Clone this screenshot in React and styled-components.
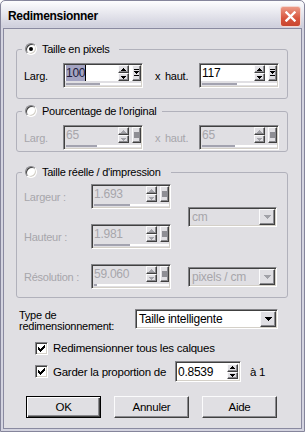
import React from 'react';
import styled, { createGlobalStyle, css } from 'styled-components';

const FACE = '#e0dfe3';
const DIS = '#a7a6ab';

const GlobalStyle = createGlobalStyle`
  html, body { margin: 0; padding: 0; background: #fff; }
  body {
    font-family: "Liberation Sans", Arial, sans-serif;
    font-size: 11px;
    letter-spacing: -0.25px;
    color: #000;
  }
  * { box-sizing: border-box; }
`;

const sunken = css`
  border: 1px solid;
  border-color: #858589 #fff #fff #858589;
  box-shadow: inset 1px 1px #404040, inset -1px -1px #d4d0c8;
`;

const raised = css`
  border: 1px solid;
  border-color: #fbfbfc #404040 #404040 #fbfbfc;
  box-shadow: inset -1px -1px #8a8a8e;
  background: ${FACE};
`;

// ---------- window chrome ----------

const Window = styled.div`
  width: 305px;
  height: 432px;
  display: flex;
  flex-direction: column;
  border: 1px solid #85859b;
  border-radius: 5px 5px 0 0;
  background: linear-gradient(#fdfdfe 0, #ebebf1 10px, #cfcfdc 26px, #d4d4e0 27px);
  padding: 0 2px 2px;
`;

const TitleBar = styled.div`
  height: 27px;
  display: flex;
  align-items: center;
  justify-content: space-between;
  padding: 0 1px 0 5px;
`;

const Title = styled.span`
  font-weight: bold;
  font-size: 12px;
  letter-spacing: -0.3px;
  margin-top: 2px;
`;

const CloseButton = styled.div`
  width: 21px;
  height: 21px;
  margin-top: 3px;
  border-radius: 3px;
  border: 1px solid #f4d6d0;
  background: linear-gradient(#ec9a86, #d8553d 60%, #c9452f);
  display: flex;
  align-items: center;
  justify-content: center;
`;

const Body = styled.div`
  flex: 1;
  background: ${FACE};
  border: 1px solid #8a8aa0;
  padding: 13px 13px 0 12px;
  display: flex;
  flex-direction: column;
`;

// ---------- group boxes ----------

const Group = styled.fieldset`
  margin: ${p => p.$mt}px 0 0;
  padding: 0 8px ${p => p.$pb}px 7px;
  border: 1px solid #b1b1bb;
  border-radius: 3px;
  min-width: 0;
`;

const Legend = styled.legend`
  display: flex;
  align-items: center;
  gap: 5px;
  height: 14px;
  margin-left: -2px;
  padding: 0 ${p => p.$pr}px 0 3px;
`;

const Radio = styled.span`
  width: 12px;
  height: 12px;
  border-radius: 50%;
  border: 1px solid;
  border-color: #858589 #fff #fff #858589;
  box-shadow: inset 1px 1px #404040, inset -1px -1px #d4d0c8;
  background: #fff;
  display: flex;
  align-items: center;
  justify-content: center;

  &::after {
    content: '';
    width: 4px;
    height: 4px;
    border-radius: 50%;
    background: ${p => (p.$checked ? '#000' : 'transparent')};
  }
`;

const PairRow = styled.div`
  display: grid;
  grid-template-columns: 39px 80px 22px 34px 80px;
  align-items: center;
  margin-top: ${p => p.$mt}px;
`;

const Label = styled.span`
  color: ${p => (p.$disabled ? DIS : '#000')};
  padding-left: ${p => p.$pl || 0}px;
  white-space: nowrap;
`;

const RealGrid = styled.div`
  display: grid;
  grid-template-columns: 67px 97px 89px;
  grid-template-rows: 25px 25px 25px;
  row-gap: 15px;
  align-items: center;
  margin-top: 5px;
`;

const GridCell = styled.div`
  grid-column: ${p => p.$col};
  grid-row: ${p => p.$row};
  align-self: center;
`;

// ---------- edit with spin + slider ----------

const EditFrame = styled.div`
  ${sunken};
  width: ${p => p.$w}px;
  height: ${p => p.$h}px;
  padding: 1px;
  display: flex;
  flex-direction: column;
  background: ${p => (p.$disabled ? FACE : '#fff')};
`;

const EditTop = styled.div`
  height: ${p => p.$h}px;
  display: flex;
  align-items: stretch;
`;

const Field = styled.div`
  flex: 1;
  padding-left: 1px;
  line-height: ${p => p.$h}px;
  font-size: 12px;
  color: ${p => (p.$disabled ? DIS : '#000')};
  background: ${p => (p.$disabled ? FACE : '#fff')};
  overflow: hidden;
  white-space: nowrap;
`;

const Selected = styled.span`
  background: #a4a4c2;
  color: #1b1b3c;
  padding: 1px 0;
  border-right: 1px solid #000;
`;

const SpinCol = styled.div`
  width: 11px;
  display: flex;
  flex-direction: column;
`;

const SpinBtn = styled.div`
  ${raised};
  flex: 1;
  display: flex;
  align-items: center;
  justify-content: center;
`;

const PopupBtn = styled.div`
  ${raised};
  width: 9px;
  margin-left: 3px;
  display: flex;
  align-items: center;
  justify-content: center;
`;

const TrackStrip = styled.div`
  flex: 1;
  background: ${FACE};
  padding: 2px 0 0 1px;
`;

const Track = styled.div`
  height: 2px;
  background: #fff;
  display: flex;
`;

const TrackFill = styled.div`
  height: 2px;
  background: #a3a3b0;
`;

const Pixels = ({ rows, color, w, h }) => (
  <svg width={w} height={h} viewBox={`0 0 ${w} ${h}`} shapeRendering="crispEdges">
    {rows.map(([x, y, rw], i) => (
      <rect key={i} x={x} y={y} width={rw} height={1} fill={color} />
    ))}
  </svg>
);

const ArrowUp = ({ color }) => <Pixels w={5} h={3} color={color} rows={[[2, 0, 1], [1, 1, 3], [0, 2, 5]]} />;
const ArrowDown = ({ color }) => <Pixels w={5} h={3} color={color} rows={[[0, 0, 5], [1, 1, 3], [2, 2, 1]]} />;
const BigArrowDown = ({ color }) => (
  <Pixels w={7} h={4} color={color} rows={[[0, 0, 7], [1, 1, 5], [2, 2, 3], [3, 3, 1]]} />
);
const PopupGlyph = () => (
  <Pixels w={5} h={8} color="#000" rows={[[0, 0, 5], [0, 2, 5], [1, 3, 3], [2, 4, 1], [0, 6, 5]]} />
);

const Spin = ({ disabled }) => {
  const c = disabled ? '#a2a2a8' : '#000';
  return (
    <SpinCol>
      <SpinBtn><ArrowUp color={c} /></SpinBtn>
      <SpinBtn><ArrowDown color={c} /></SpinBtn>
    </SpinCol>
  );
};

const DisabledSquare = styled.span`
  width: 5px;
  height: 6px;
  background: #8e8e94;
`;

function SliderEdit({ value, disabled, selected, fill }) {
  return (
    <EditFrame $w={80} $h={25} $disabled={disabled}>
      <EditTop $h={16}>
        <Field $h={16} $disabled={disabled}>
          {selected ? <Selected>{value}</Selected> : value}
        </Field>
        <Spin disabled={disabled} />
        <PopupBtn>{disabled ? <DisabledSquare /> : <PopupGlyph />}</PopupBtn>
      </EditTop>
      <TrackStrip>
        <Track>
          <TrackFill style={{ width: fill }} />
        </Track>
      </TrackStrip>
    </EditFrame>
  );
}

// ---------- drop down ----------

const SelectBox = styled.div`
  ${sunken};
  width: ${p => p.$w}px;
  height: 20px;
  padding: 1px;
  display: flex;
  background: ${p => (p.$disabled ? FACE : '#fff')};
`;

const SelectText = styled.span`
  flex: 1;
  padding-left: 2px;
  line-height: 16px;
  font-size: 12px;
  color: ${p => (p.$disabled ? DIS : '#000')};
`;

const SelectBtn = styled.span`
  ${raised};
  width: 16px;
  display: flex;
  align-items: center;
  justify-content: center;
`;

function Select({ value, width, disabled }) {
  return (
    <SelectBox $w={width} $disabled={disabled}>
      <SelectText $disabled={disabled}>{value}</SelectText>
      <SelectBtn><BigArrowDown color={disabled ? '#a2a2a8' : '#000'} /></SelectBtn>
    </SelectBox>
  );
}

// ---------- bottom part ----------

const TypeRow = styled.div`
  display: flex;
  align-items: flex-start;
  height: 24px;
  margin-top: 11px;
`;

const TypeLabel = styled.div`
  width: 116px;
  margin-left: 3px;
  padding-top: 1px;
  line-height: 11px;
`;

const CheckRow = styled.div`
  display: flex;
  align-items: center;
  height: ${p => p.$h}px;
  margin-top: ${p => p.$mt}px;
  padding-left: 19px;
`;

const CheckBox = styled.span`
  ${sunken};
  width: 13px;
  height: 13px;
  background: #fff;
  display: flex;
  align-items: center;
  justify-content: center;
  flex: none;
`;

const CheckText = styled.span`
  margin-left: 5px;
  font-size: 11.5px;
  width: ${p => (p.$w ? `${p.$w}px` : 'auto')};
`;

const CheckMark = () => (
  <Pixels
    w={7}
    h={7}
    color="#000"
    rows={[[6, 0, 1], [5, 1, 2], [0, 2, 1], [4, 2, 3], [0, 3, 2], [3, 3, 3], [0, 4, 5], [1, 5, 3], [2, 6, 1]]}
  />
);

const NumberFrame = styled.div`
  ${sunken};
  width: 66px;
  height: 21px;
  padding: 2px 2px 2px 1px;
  display: flex;
  background: #fff;
`;

const NumberText = styled.span`
  flex: 1;
  padding-left: 1px;
  line-height: 16px;
  font-size: 12px;
`;

const Suffix = styled.span`
  margin-left: 9px;
  font-size: 11.5px;
`;

const ButtonRow = styled.div`
  display: flex;
  gap: 13px;
  margin-top: 14px;
  padding-left: 10px;
`;

const Button = styled.div`
  width: 75px;
  height: 22px;
  display: flex;
  align-items: center;
  justify-content: center;
  font-size: 11.5px;
  background: ${FACE};
  border: 1px solid;
  ${p =>
    p.$default
      ? css`
          border-color: #000;
          box-shadow: inset 1px 1px #fff, inset -1px -1px #404040, inset -2px -2px #8a8a8e;
        `
      : css`
          border-color: #fbfbfc #404040 #404040 #fbfbfc;
          box-shadow: inset -1px -1px #8a8a8e;
        `}
`;

export default function App() {
  return (
    <>
      <GlobalStyle />
      <Window>
        <TitleBar>
          <Title>Redimensionner</Title>
          <CloseButton>
            <svg width="11" height="11" viewBox="0 0 11 11">
              <path d="M1.5 1.5 L9.5 9.5 M9.5 1.5 L1.5 9.5" stroke="#fff" strokeWidth="2.4" strokeLinecap="square" />
            </svg>
          </CloseButton>
        </TitleBar>
        <Body>
          <Group $mt={0} $pb={10}>
            <Legend $pr={9}>
              <Radio $checked />
              <span>Taille en pixels</span>
            </Legend>
            <PairRow $mt={7}>
              <Label>Larg.</Label>
              <SliderEdit value="100" selected fill={34} />
              <Label $pl={12}>x</Label>
              <Label>haut.</Label>
              <SliderEdit value="117" fill={35} />
            </PairRow>
          </Group>

          <Group $mt={5} $pb={1}>
            <Legend $pr={5}>
              <Radio />
              <span>Pourcentage de l'original</span>
            </Legend>
            <PairRow $mt={7}>
              <Label $disabled>Larg.</Label>
              <SliderEdit value="65" disabled fill={31} />
              <Label $disabled $pl={12}>x</Label>
              <Label $disabled>haut.</Label>
              <SliderEdit value="65" disabled fill={33} />
            </PairRow>
          </Group>

          <Group $mt={13} $pb={8}>
            <Legend $pr={10}>
              <Radio />
              <span>Taille réelle / d'impression</span>
            </Legend>
            <RealGrid>
              <GridCell $col={1} $row={1}><Label $disabled>Largeur :</Label></GridCell>
              <GridCell $col={2} $row={1}><SliderEdit value="1.693" disabled fill={36} /></GridCell>
              <GridCell $col={1} $row={2}><Label $disabled>Hauteur :</Label></GridCell>
              <GridCell $col={2} $row={2}><SliderEdit value="1.981" disabled fill={36} /></GridCell>
              <GridCell $col={3} $row="1 / span 2"><Select value="cm" width={89} disabled /></GridCell>
              <GridCell $col={1} $row={3}><Label $disabled>Résolution :</Label></GridCell>
              <GridCell $col={2} $row={3}><SliderEdit value="59.060" disabled fill={3} /></GridCell>
              <GridCell $col={3} $row={3}><Select value="pixels / cm" width={89} disabled /></GridCell>
            </RealGrid>
          </Group>

          <TypeRow>
            <TypeLabel>
              Type de
              <br />
              redimensionnement:
            </TypeLabel>
            <Select value="Taille intelligente" width={143} />
          </TypeRow>

          <CheckRow $h={16} $mt={7}>
            <CheckBox><CheckMark /></CheckBox>
            <CheckText>Redimensionner tous les calques</CheckText>
          </CheckRow>

          <CheckRow $h={21} $mt={5}>
            <CheckBox><CheckMark /></CheckBox>
            <CheckText $w={122}>Garder la proportion de</CheckText>
            <NumberFrame>
              <NumberText>0.8539</NumberText>
              <Spin />
            </NumberFrame>
            <Suffix>à 1</Suffix>
          </CheckRow>

          <ButtonRow>
            <Button $default>OK</Button>
            <Button>Annuler</Button>
            <Button>Aide</Button>
          </ButtonRow>
        </Body>
      </Window>
    </>
  );
}
